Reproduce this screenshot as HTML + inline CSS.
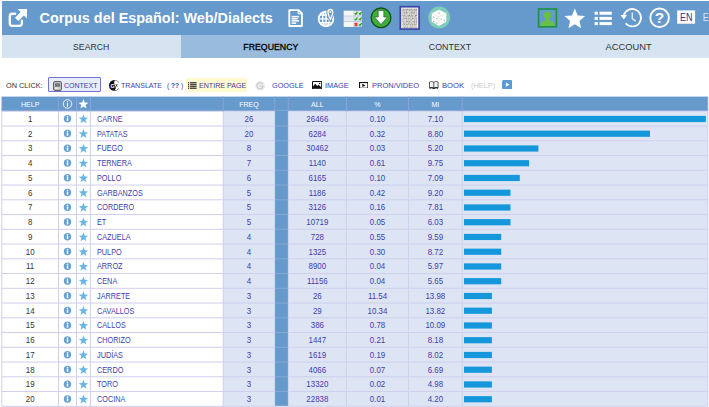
<!DOCTYPE html>
<html lang="es">
<head>
<meta charset="utf-8">
<title>Corpus del Español: Web/Dialects</title>
<style>
html,body{margin:0;padding:0;background:#fff;}
body{width:709px;height:407px;overflow:hidden;position:relative;font-family:"Liberation Sans",sans-serif;}
#hdr{position:absolute;left:2px;top:1px;width:716px;height:34px;background:#6699cc;}
#title{position:absolute;left:37.5px;top:7.5px;font-size:14.4px;font-weight:bold;color:#fff;white-space:nowrap;line-height:18px;}
.ic{position:absolute;}
#nav{position:absolute;left:2px;top:35px;width:716px;height:23px;background:#d6e4f1;}
.tab{position:absolute;top:0;height:23px;width:179px;text-align:center;font-size:9.2px;line-height:25.2px;color:#333;}
.tab b{display:inline-block;font-weight:inherit;}
.tab.on{background:#99bbdd;color:#000;-webkit-text-stroke:.3px #000;}
#oc{position:absolute;left:0;top:77.500px;height:15px;width:709px;font-size:8px;color:#333;}
#oc span{position:absolute;top:0;line-height:15px;white-space:nowrap;color:#4040aa;transform-origin:0 50%;display:block;}
#oc svg{position:absolute;}
#tb{position:absolute;left:0;top:0;}
</style>
</head>
<body>
<div id="hdr">
<svg class="ic" style="left:-2px;top:-1px" width="709" height="36" viewBox="0 0 709 36">
<!-- external link -->
<g fill="none" stroke="#fff" stroke-width="2.300" stroke-linecap="round" stroke-linejoin="round">
<path d="M15.200 13.750H12.300a2.500 2.500 0 0 0-2.500 2.500v7.100a2.500 2.500 0 0 0 2.500 2.500h7.100a2.500 2.500 0 0 0 2.500-2.500V20.600"/>
</g>
<path d="M17.500 9H27v9.500l-3.120-3.120-5.580 5.620-3.300-3.300 5.620-5.580z" fill="#fff"/>
<!-- doc -->
<g>
<path d="M289.300 10.100h9.300l3.300 3.300v12.600h-12.600z" fill="none" stroke="#fff" stroke-width="1.900" stroke-linejoin="round"/>
<path d="M298.200 10.400v3.400h3.400" fill="none" stroke="#fff" stroke-width="1.100"/>
<rect x="291.600" y="15.900" width="7.400" height="1.500" fill="#fff"/>
<rect x="291.600" y="18" width="6" height="1.500" fill="#fff"/>
<rect x="291.600" y="20.100" width="7.400" height="1.500" fill="#fff"/>
<rect x="291.600" y="22.400" width="4.600" height="1.500" fill="#fff"/>
</g>
<!-- globe with pin -->
<g fill="none" stroke="#fff">
<circle cx="326" cy="18.900" r="7.400" stroke-width="1.700"/>
<ellipse cx="326" cy="18.900" rx="3.500" ry="7.400" stroke-width="1.400"/>
<path d="M318.600 18.900h14.800M319.800 15h12.400M319.800 22.800h12.400M326 11.500v14.800" stroke-width="1.400"/>
</g>
<path d="M330.400 9.500a2.400 2.400 0 0 1 2.400 2.400c0 2.300-2.400 7.300-2.400 7.300s-2.400-5-2.400-7.300a2.400 2.400 0 0 1 2.400-2.400z" fill="#6699cc" stroke="#6699cc" stroke-width="3.200"/>
<path d="M330.400 9.500a2.400 2.400 0 0 1 2.400 2.400c0 2.300-2.400 7.300-2.400 7.300s-2.400-5-2.400-7.300a2.400 2.400 0 0 1 2.400-2.400z" fill="#6699cc" stroke="#fff" stroke-width="1.300"/>
<circle cx="330.400" cy="12" r=".9" fill="#fff"/>
<!-- grid -->
<g>
<rect x="343.800" y="10.800" width="18" height="16" fill="#e8e8e8"/>
<rect x="343.800" y="10.800" width="9.800" height="4.800" fill="#f6f6f6"/>
<rect x="343.800" y="16.400" width="9.800" height="4.800" fill="#e6ecf4"/>
<rect x="343.800" y="22" width="9.800" height="4.800" fill="#f6f6f6"/>
<rect x="343.800" y="15.700" width="18" height=".7" fill="#b8c8dc"/>
<rect x="343.800" y="21.300" width="18" height=".7" fill="#b8c8dc"/>
<rect x="353.600" y="10.800" width=".7" height="16" fill="#b8c8dc"/>
<rect x="357.700" y="10.800" width=".7" height="16" fill="#b8c8dc"/>
<g fill="none" stroke="#2aa52a" stroke-width="1.300">
<path d="M354.800 13.200l1 1.200 1.600-2.600M359 13.200l1 1.200 1.600-2.600M354.800 18.800l1 1.200 1.600-2.600M359 18.800l1 1.200 1.600-2.600M359 24.400l1 1.200 1.600-2.600"/>
</g>
<path d="M354.800 23l2.400 3M357.200 23l-2.400 3" stroke="#e03030" stroke-width="1.300" fill="none"/>
</g>
<!-- green download -->
<circle cx="381" cy="17.800" r="9.800" fill="#3fae3a" stroke="#14521a" stroke-width="1.400"/>
<path d="M378.200 10.400h5.600v6.600h3.700l-6.500 7.600-6.500-7.600h3.700z" fill="#fff" stroke="#14521a" stroke-width=".6" stroke-linejoin="round"/>
<!-- text doc -->
<rect x="400.300" y="6.700" width="18.800" height="22.400" fill="#f2efe4" stroke="#3a46a8" stroke-width="1.700"/>
<g fill="none">
<path d="M402.400 9.30h14.600" stroke="#7d7d7d" stroke-width=".95" stroke-dasharray="1.2 0.4 1.6 0.7 0.6 0.4 2.0 0.4" stroke-dashoffset="1.10"/>
<path d="M402.400 10.82h14.600" stroke="#858585" stroke-width=".95" stroke-dasharray="2.0 0.4 0.6 0.4 1.6 0.5 0.6 0.4" stroke-dashoffset="0.27"/>
<path d="M402.400 12.34h14.600" stroke="#8c8c8c" stroke-width=".95" stroke-dasharray="0.6 0.7 0.6 0.4 2.0 0.4 2.0 0.7" stroke-dashoffset="1.19"/>
<path d="M402.400 13.86h14.600" stroke="#8c8c8c" stroke-width=".95" stroke-dasharray="0.6 0.7 0.9 0.5 1.6 0.4 2.0 0.4" stroke-dashoffset="1.71"/>
<path d="M402.400 15.38h14.600" stroke="#7d7d7d" stroke-width=".95" stroke-dasharray="0.6 0.7 2.0 0.7 0.9 0.5 0.6 0.7" stroke-dashoffset="2.14"/>
<path d="M402.400 16.90h14.600" stroke="#858585" stroke-width=".95" stroke-dasharray="2.0 0.4 1.6 0.7 2.0 0.5 1.2 0.5" stroke-dashoffset="1.76"/>
<path d="M402.400 18.42h14.600" stroke="#999" stroke-width=".95" stroke-dasharray="1.2 0.5 0.9 0.4 0.9 0.4 2.0 0.5" stroke-dashoffset="1.58"/>
<path d="M402.400 19.94h14.600" stroke="#8c8c8c" stroke-width=".95" stroke-dasharray="1.6 0.5 2.0 0.4 0.6 0.7 1.6 0.4" stroke-dashoffset="2.27"/>
<path d="M402.400 21.46h14.600" stroke="#999" stroke-width=".95" stroke-dasharray="1.6 0.5 0.6 0.7 0.6 0.7 2.0 0.5" stroke-dashoffset="1.02"/>
<path d="M402.400 22.98h14.600" stroke="#7d7d7d" stroke-width=".95" stroke-dasharray="2.0 0.5 2.0 0.5 0.6 0.4 1.2 0.5" stroke-dashoffset="2.09"/>
<path d="M402.400 24.50h14.600" stroke="#999" stroke-width=".95" stroke-dasharray="0.6 0.7 1.2 0.7 2.0 0.7 1.6 0.5" stroke-dashoffset="2.15"/>
<path d="M402.400 26.02h14.600" stroke="#999" stroke-width=".95" stroke-dasharray="0.6 0.5 1.2 0.4 2.0 0.4 1.6 0.4" stroke-dashoffset="0.65"/>
<path d="M402.400 27.54h14.600" stroke="#999" stroke-width=".95" stroke-dasharray="0.9 0.7 0.9 0.5 1.6 0.5 0.6 0.4" stroke-dashoffset="1.35"/>
</g>
<!-- dice -->
<circle cx="439.200" cy="17.500" r="10.900" fill="#7fccba"/>
<path d="M439 9.800l7.300 3.400v8.600l-7.300 4.300-7.300-4.300v-8.600z" fill="#fcfcf8"/>
<path d="M431.700 13.200l7.300 3.700 7.300-3.700M439 16.900v9.200" fill="none" stroke="#e4e4d8" stroke-width=".7"/>
<g fill="#6a70b8">
<circle cx="439" cy="13" r=".6"/><circle cx="433.600" cy="17" r=".55"/><circle cx="436.900" cy="23" r=".55"/><circle cx="433.600" cy="21.200" r=".55"/><circle cx="436.900" cy="18.600" r=".55"/><circle cx="444.200" cy="20.200" r=".55"/><circle cx="441.200" cy="19" r=".55"/>
</g>
<!-- user -->
<rect x="538.600" y="9" width="17.800" height="17.800" fill="#6699cc" stroke="#1c9444" stroke-width="1.700"/>
<circle cx="547.500" cy="15.200" r="3.700" fill="#6abf45"/>
<path d="M540.300 25.900c.4-3.600 3-5.400 7.200-5.400s6.800 1.800 7.200 5.400z" fill="#6abf45"/>
<rect x="545.700" y="17.500" width="3.600" height="4" fill="#6abf45"/>
<!-- star -->
<path d="M574.800 8.500l2.900 6.900 7.400.6-5.600 4.900 1.700 7.300-6.400-3.900-6.400 3.900 1.700-7.300-5.600-4.900 7.400-.6z" fill="#fff"/>
<!-- list -->
<g fill="#fff">
<rect x="594.600" y="11.700" width="3.200" height="3"/><rect x="599.500" y="11.700" width="12.300" height="3"/>
<rect x="594.600" y="16.900" width="3.200" height="3"/><rect x="599.500" y="16.900" width="12.300" height="3"/>
<rect x="594.600" y="22.100" width="3.200" height="3"/><rect x="599.500" y="22.100" width="12.300" height="3"/>
</g>
<!-- history -->
<path d="M623.600 17.400a8.700 8.700 0 1 1 2 5.900" fill="none" stroke="#fff" stroke-width="1.800"/>
<path d="M620.500 15l3.300 4.600 3.200-4.600z" fill="#fff"/>
<path d="M632.300 12.400v6.200l3.400 2.500" fill="none" stroke="#e2ecf6" stroke-width="1.400"/>
<!-- help -->
<circle cx="659.600" cy="17.800" r="9.300" fill="none" stroke="#fff" stroke-width="1.900"/>
<text x="659.600" y="23.400" text-anchor="middle" font-family="Liberation Sans, sans-serif" font-weight="bold" font-size="15.500" fill="#fff">?</text>
<!-- EN -->
<rect x="677.200" y="10.400" width="17.900" height="13.300" fill="#fff"/>
<text transform="translate(686.200 20.900) scale(.9 1)" text-anchor="middle" font-family="Liberation Sans, sans-serif" font-size="10" fill="#33338f">EN</text>
<text transform="translate(702.700 20.900) scale(.9 1)" font-family="Liberation Sans, sans-serif" font-size="10" fill="#d8e8f8">ES</text>
</svg>

<div id="title">Corpus del Español: Web/Dialects</div>
</div>
<div id="nav">
<div class="tab" style="left:0"><b style="transform:scaleX(.945)">SEARCH</b></div>
<div class="tab on" style="left:179px"><b style="transform:scaleX(.953)">FREQUENCY</b></div>
<div class="tab" style="left:358px"><b style="transform:scaleX(.963)">CONTEXT</b></div>
<div class="tab" style="left:537px"><b style="transform:scaleX(1.017)">ACCOUNT</b></div>
</div>
<div id="oc">
<span style="left:6.400px;color:#333;transform:scaleX(.915)">ON CLICK:</span>
<div style="position:absolute;left:48.200px;top:-.5px;width:53.200px;height:15px;box-sizing:border-box;border:1px solid #7272d2;background:#e6ecf8;border-radius:1px"></div>
<svg style="left:53px;top:3px" width="9" height="10" viewBox="0 0 9 10"><rect x=".6" y=".6" width="7.800" height="8.800" rx="1.200" fill="#c9c9c9" stroke="#555" stroke-width="1"/><rect x="2" y="2.200" width="5" height="3.600" fill="#777"/><rect x="2" y="6.400" width="3.400" height="1.600" fill="#e8e8e8"/></svg>
<span style="left:63.800px;transform:scaleX(.874)">CONTEXT</span>
<svg style="left:108.600px;top:2.600px" width="10.800" height="10.800" viewBox="0 0 20 20"><circle cx="10" cy="10" r="10" fill="#111"/><path d="M10.500.8a9.200 9.200 0 0 1 0 18.400c2.400-2.600 2.600-5.400.8-8.400-1.600-2.800-2.600-6-.8-10z" fill="#fff"/><text x="3" y="14" font-family="Liberation Sans, sans-serif" font-size="10" font-weight="bold" fill="#fff">G</text><path d="M12.500 7.500l3 5M15.500 7.500l-3 5" stroke="#111" stroke-width="1.200"/></svg>
<span style="left:121px;transform:scaleX(.881)">TRANSLATE</span>
<span style="left:167px;transform:scaleX(.83)">( <b>??</b> )</span>
<div style="position:absolute;left:186px;top:.4px;width:61.100px;height:14px;background:#fff9cf"></div>
<svg style="left:188px;top:4px" width="8.600" height="7.600" viewBox="0 0 8.600 7.600"><g fill="#222"><rect x="0" y=".2" width="1.200" height="1.200"/><rect x="2" y=".2" width="6.600" height="1.200"/><rect x="0" y="2.200" width="1.200" height="1.200"/><rect x="2" y="2.200" width="6.600" height="1.200"/><rect x="0" y="4.200" width="1.200" height="1.200"/><rect x="2" y="4.200" width="6.600" height="1.200"/><rect x="0" y="6.200" width="1.200" height="1.200"/><rect x="2" y="6.200" width="6.600" height="1.200"/></g></svg>
<span style="left:198.800px;transform:scaleX(.887)">ENTIRE PAGE</span>
<svg style="left:255.400px;top:3px" width="10.400" height="9.400" viewBox="0 0 20 18"><ellipse cx="10" cy="9" rx="9.600" ry="8.800" fill="#ececec"/><path d="M14.600 5.800a6 5.600 0 1 0 1.200 4H10.400" fill="none" stroke="#cdcdcd" stroke-width="2.600"/></svg>
<span style="left:271.600px;transform:scaleX(.911)">GOOGLE</span>
<svg style="left:311.500px;top:3.300px" width="10.200" height="8.400" viewBox="0 0 10.200 8.400"><rect x="0" y="0" width="10.200" height="8.400" rx="1" fill="#111"/><rect x="1" y="1" width="8.200" height="6.400" fill="#fff"/><path d="M1 7.400v-2l2.200-2.600 2 2.200 1.400-1.200 2.600 2.400v1.200z" fill="#111"/><circle cx="7.600" cy="2.500" r=".8" fill="#111"/></svg>
<span style="left:324.600px;transform:scaleX(.919)">IMAGE</span>
<svg style="left:359px;top:4.100px" width="9.400" height="6.800" viewBox="0 0 9.400 6.800"><rect x=".55" y=".55" width="8.300" height="5.700" fill="#fff" stroke="#111" stroke-width="1.100"/><path d="M3.300 1.700l3.300 1.700-3.300 1.700z" fill="#111"/></svg>
<span style="left:371.700px;transform:scaleX(.936)">PRON/VIDEO</span>
<svg style="left:429.400px;top:3.700px" width="9.600" height="8" viewBox="0 0 9.600 8"><path d="M.5 1.100c1.600-.8 3-.8 4.300.2 1.300-1 2.700-1 4.300-.2v5.800c-1.600-.6-3-.5-4.300.3-1.300-.8-2.700-.9-4.300-.3z" fill="#f4f4f4" stroke="#333" stroke-width=".8" stroke-linejoin="round"/><path d="M4.800 1.300v6" stroke="#333" stroke-width=".8"/><path d="M.5 7.200c1.600-.6 3-.5 4.300.3 1.300-.8 2.700-.9 4.300-.3" fill="none" stroke="#111" stroke-width="1.100"/></svg>
<span style="left:441.700px;transform:scaleX(.956)">BOOK</span>
<span style="left:471.300px;transform:scaleX(.919);color:#ccc">(HELP)</span>
<svg style="left:501.700px;top:2.700px" width="10.600" height="9.200" viewBox="0 0 10.600 9.200"><rect x="0" y="0" width="10.600" height="9.200" rx="1.600" fill="#5b9bd5"/><path d="M3.900 2.400l3.600 2.200-3.600 2.200z" fill="#fff"/></svg>

</div>
<svg id="tb" width="709" height="407" viewBox="0 0 709 407" font-family="Liberation Sans, sans-serif">
<rect x="1.8" y="96.6" width="706.0" height="14.30" fill="#6699cc"/>
<rect x="223.2" y="111.3" width="484.6" height="295.00" fill="#dde5f5"/>
<rect x="1.8" y="110.80" width="706.0" height="1" fill="#cfcfee"/>
<rect x="1.8" y="125.55" width="706.0" height="1" fill="#cfcfee"/>
<rect x="1.8" y="140.30" width="706.0" height="1" fill="#cfcfee"/>
<rect x="1.8" y="155.05" width="706.0" height="1" fill="#cfcfee"/>
<rect x="1.8" y="169.80" width="706.0" height="1" fill="#cfcfee"/>
<rect x="1.8" y="184.55" width="706.0" height="1" fill="#cfcfee"/>
<rect x="1.8" y="199.30" width="706.0" height="1" fill="#cfcfee"/>
<rect x="1.8" y="214.05" width="706.0" height="1" fill="#cfcfee"/>
<rect x="1.8" y="228.80" width="706.0" height="1" fill="#cfcfee"/>
<rect x="1.8" y="243.55" width="706.0" height="1" fill="#cfcfee"/>
<rect x="1.8" y="258.30" width="706.0" height="1" fill="#cfcfee"/>
<rect x="1.8" y="273.05" width="706.0" height="1" fill="#cfcfee"/>
<rect x="1.8" y="287.80" width="706.0" height="1" fill="#cfcfee"/>
<rect x="1.8" y="302.55" width="706.0" height="1" fill="#cfcfee"/>
<rect x="1.8" y="317.30" width="706.0" height="1" fill="#cfcfee"/>
<rect x="1.8" y="332.05" width="706.0" height="1" fill="#cfcfee"/>
<rect x="1.8" y="346.80" width="706.0" height="1" fill="#cfcfee"/>
<rect x="1.8" y="361.55" width="706.0" height="1" fill="#cfcfee"/>
<rect x="1.8" y="376.30" width="706.0" height="1" fill="#cfcfee"/>
<rect x="1.8" y="391.05" width="706.0" height="1" fill="#cfcfee"/>
<rect x="1.8" y="405.80" width="706.0" height="1" fill="#cfcfee"/>
<rect x="1.30" y="111.3" width="1" height="295.00" fill="#cfcfee"/>
<rect x="58.00" y="111.3" width="1" height="295.00" fill="#cfcfee"/>
<rect x="76.00" y="111.3" width="1" height="295.00" fill="#cfcfee"/>
<rect x="89.90" y="111.3" width="1" height="295.00" fill="#cfcfee"/>
<rect x="222.70" y="111.3" width="1" height="295.00" fill="#cfcfee"/>
<rect x="274.30" y="111.3" width="1" height="295.00" fill="#cfcfee"/>
<rect x="287.70" y="111.3" width="1" height="295.00" fill="#cfcfee"/>
<rect x="346.00" y="111.3" width="1" height="295.00" fill="#cfcfee"/>
<rect x="408.00" y="111.3" width="1" height="295.00" fill="#cfcfee"/>
<rect x="461.70" y="111.3" width="1" height="295.00" fill="#cfcfee"/>
<rect x="707.30" y="111.3" width="1" height="295.00" fill="#cfcfee"/>
<rect x="275.10" y="110.8" width="12.80" height="295.00" fill="#6699cc"/>
<rect x="275.10" y="125.55" width="12.80" height="1" fill="#c9d6f0" opacity=".28"/>
<rect x="275.10" y="140.30" width="12.80" height="1" fill="#c9d6f0" opacity=".28"/>
<rect x="275.10" y="155.05" width="12.80" height="1" fill="#c9d6f0" opacity=".28"/>
<rect x="275.10" y="169.80" width="12.80" height="1" fill="#c9d6f0" opacity=".28"/>
<rect x="275.10" y="184.55" width="12.80" height="1" fill="#c9d6f0" opacity=".28"/>
<rect x="275.10" y="199.30" width="12.80" height="1" fill="#c9d6f0" opacity=".28"/>
<rect x="275.10" y="214.05" width="12.80" height="1" fill="#c9d6f0" opacity=".28"/>
<rect x="275.10" y="228.80" width="12.80" height="1" fill="#c9d6f0" opacity=".28"/>
<rect x="275.10" y="243.55" width="12.80" height="1" fill="#c9d6f0" opacity=".28"/>
<rect x="275.10" y="258.30" width="12.80" height="1" fill="#c9d6f0" opacity=".28"/>
<rect x="275.10" y="273.05" width="12.80" height="1" fill="#c9d6f0" opacity=".28"/>
<rect x="275.10" y="287.80" width="12.80" height="1" fill="#c9d6f0" opacity=".28"/>
<rect x="275.10" y="302.55" width="12.80" height="1" fill="#c9d6f0" opacity=".28"/>
<rect x="275.10" y="317.30" width="12.80" height="1" fill="#c9d6f0" opacity=".28"/>
<rect x="275.10" y="332.05" width="12.80" height="1" fill="#c9d6f0" opacity=".28"/>
<rect x="275.10" y="346.80" width="12.80" height="1" fill="#c9d6f0" opacity=".28"/>
<rect x="275.10" y="361.55" width="12.80" height="1" fill="#c9d6f0" opacity=".28"/>
<rect x="275.10" y="376.30" width="12.80" height="1" fill="#c9d6f0" opacity=".28"/>
<rect x="275.10" y="391.05" width="12.80" height="1" fill="#c9d6f0" opacity=".28"/>
<rect x="58.00" y="96.6" width="1" height="14.70" fill="#8f9fe0"/>
<rect x="76.00" y="96.6" width="1" height="14.70" fill="#8f9fe0"/>
<rect x="89.90" y="96.6" width="1" height="14.70" fill="#8f9fe0"/>
<rect x="222.70" y="96.6" width="1" height="14.70" fill="#8f9fe0"/>
<rect x="274.30" y="96.6" width="1" height="14.70" fill="#8f9fe0"/>
<rect x="287.70" y="96.6" width="1" height="14.70" fill="#8f9fe0"/>
<rect x="346.00" y="96.6" width="1" height="14.70" fill="#8f9fe0"/>
<rect x="408.00" y="96.6" width="1" height="14.70" fill="#8f9fe0"/>
<rect x="461.70" y="96.6" width="1" height="14.70" fill="#8f9fe0"/>
<rect x="1.30" y="96.6" width="1" height="14.70" fill="#8f9fe0" opacity=".6"/>
<rect x="707.30" y="96.6" width="1" height="14.70" fill="#8f9fe0" opacity=".6"/>
<text transform="translate(30.15 106.70) scale(0.93 1)" font-size="7.6" fill="#fff" text-anchor="middle">HELP</text>
<text transform="translate(249.00 106.70) scale(0.93 1)" font-size="7.6" fill="#fff" text-anchor="middle">FREQ</text>
<text transform="translate(317.35 106.70) scale(0.93 1)" font-size="7.6" fill="#fff" text-anchor="middle">ALL</text>
<text transform="translate(377.50 106.70) scale(0.93 1)" font-size="7.6" fill="#fff" text-anchor="middle">%</text>
<text transform="translate(435.35 106.70) scale(0.93 1)" font-size="7.6" fill="#fff" text-anchor="middle">MI</text>
<g fill="#fff"><circle cx="67.50" cy="103.95" r="4.300" fill="none" stroke="#fff" stroke-width=".9"/><rect x="67.00" y="103.05" width="1" height="3.500"/><circle cx="67.50" cy="101.75" r=".65"/></g>
<path transform="translate(78.45 99.05) scale(.5)" d="M10 0l2.600 6.900 7.400.3-5.800 4.600 2 7.200L10 14.900 3.800 19l2-7.200L0 7.200l7.400-.3z" fill="#fff"/>
<text transform="translate(30.15 121.97) scale(0.965 1)" font-size="8.2" fill="#333" text-anchor="middle">1</text>
<circle cx="67.50" cy="118.77" r="3.700" fill="#64a1d3"/><rect x="66.75" y="118.08" width="1.500" height="3" fill="#fff"/><circle cx="67.50" cy="116.77" r=".85" fill="#fff"/>
<path transform="translate(78.75 114.27) scale(.47)" d="M10 0l2.600 6.900 7.400.3-5.800 4.600 2 7.200L10 14.900 3.800 19l2-7.200L0 7.200l7.400-.3z" fill="#6ab5e2"/>
<text transform="translate(97.00 121.97) scale(0.89 1)" font-size="8.2" fill="#4040aa" text-anchor="start">CARNE</text>
<text transform="translate(249.00 121.97) scale(0.965 1)" font-size="8.2" fill="#4040aa" text-anchor="middle">26</text>
<text transform="translate(317.35 121.97) scale(0.965 1)" font-size="8.2" fill="#4040aa" text-anchor="middle">26466</text>
<text transform="translate(377.50 121.97) scale(0.965 1)" font-size="8.2" fill="#4040aa" text-anchor="middle">0.10</text>
<text transform="translate(435.35 121.97) scale(0.965 1)" font-size="8.2" fill="#4040aa" text-anchor="middle">7.10</text>
<rect x="464.00" y="115.88" width="241.8" height="6.200" fill="#1497db"/>
<text transform="translate(30.15 136.73) scale(0.965 1)" font-size="8.2" fill="#333" text-anchor="middle">2</text>
<circle cx="67.50" cy="133.53" r="3.700" fill="#64a1d3"/><rect x="66.75" y="132.83" width="1.500" height="3" fill="#fff"/><circle cx="67.50" cy="131.53" r=".85" fill="#fff"/>
<path transform="translate(78.75 129.03) scale(.47)" d="M10 0l2.600 6.900 7.400.3-5.800 4.600 2 7.200L10 14.900 3.800 19l2-7.200L0 7.200l7.400-.3z" fill="#6ab5e2"/>
<text transform="translate(97.00 136.73) scale(0.89 1)" font-size="8.2" fill="#4040aa" text-anchor="start">PATATAS</text>
<text transform="translate(249.00 136.73) scale(0.965 1)" font-size="8.2" fill="#4040aa" text-anchor="middle">20</text>
<text transform="translate(317.35 136.73) scale(0.965 1)" font-size="8.2" fill="#4040aa" text-anchor="middle">6284</text>
<text transform="translate(377.50 136.73) scale(0.965 1)" font-size="8.2" fill="#4040aa" text-anchor="middle">0.32</text>
<text transform="translate(435.35 136.73) scale(0.965 1)" font-size="8.2" fill="#4040aa" text-anchor="middle">8.80</text>
<rect x="464.00" y="130.62" width="186.0" height="6.200" fill="#1497db"/>
<text transform="translate(30.15 151.48) scale(0.965 1)" font-size="8.2" fill="#333" text-anchor="middle">3</text>
<circle cx="67.50" cy="148.28" r="3.700" fill="#64a1d3"/><rect x="66.75" y="147.58" width="1.500" height="3" fill="#fff"/><circle cx="67.50" cy="146.28" r=".85" fill="#fff"/>
<path transform="translate(78.75 143.78) scale(.47)" d="M10 0l2.600 6.900 7.400.3-5.800 4.600 2 7.200L10 14.900 3.800 19l2-7.200L0 7.200l7.400-.3z" fill="#6ab5e2"/>
<text transform="translate(97.00 151.48) scale(0.89 1)" font-size="8.2" fill="#4040aa" text-anchor="start">FUEGO</text>
<text transform="translate(249.00 151.48) scale(0.965 1)" font-size="8.2" fill="#4040aa" text-anchor="middle">8</text>
<text transform="translate(317.35 151.48) scale(0.965 1)" font-size="8.2" fill="#4040aa" text-anchor="middle">30462</text>
<text transform="translate(377.50 151.48) scale(0.965 1)" font-size="8.2" fill="#4040aa" text-anchor="middle">0.03</text>
<text transform="translate(435.35 151.48) scale(0.965 1)" font-size="8.2" fill="#4040aa" text-anchor="middle">5.20</text>
<rect x="464.00" y="145.38" width="74.4" height="6.200" fill="#1497db"/>
<text transform="translate(30.15 166.23) scale(0.965 1)" font-size="8.2" fill="#333" text-anchor="middle">4</text>
<circle cx="67.50" cy="163.03" r="3.700" fill="#64a1d3"/><rect x="66.75" y="162.33" width="1.500" height="3" fill="#fff"/><circle cx="67.50" cy="161.03" r=".85" fill="#fff"/>
<path transform="translate(78.75 158.53) scale(.47)" d="M10 0l2.600 6.900 7.400.3-5.800 4.600 2 7.200L10 14.900 3.800 19l2-7.200L0 7.200l7.400-.3z" fill="#6ab5e2"/>
<text transform="translate(97.00 166.23) scale(0.89 1)" font-size="8.2" fill="#4040aa" text-anchor="start">TERNERA</text>
<text transform="translate(249.00 166.23) scale(0.965 1)" font-size="8.2" fill="#4040aa" text-anchor="middle">7</text>
<text transform="translate(317.35 166.23) scale(0.965 1)" font-size="8.2" fill="#4040aa" text-anchor="middle">1140</text>
<text transform="translate(377.50 166.23) scale(0.965 1)" font-size="8.2" fill="#4040aa" text-anchor="middle">0.61</text>
<text transform="translate(435.35 166.23) scale(0.965 1)" font-size="8.2" fill="#4040aa" text-anchor="middle">9.75</text>
<rect x="464.00" y="160.12" width="65.1" height="6.200" fill="#1497db"/>
<text transform="translate(30.15 180.98) scale(0.965 1)" font-size="8.2" fill="#333" text-anchor="middle">5</text>
<circle cx="67.50" cy="177.78" r="3.700" fill="#64a1d3"/><rect x="66.75" y="177.08" width="1.500" height="3" fill="#fff"/><circle cx="67.50" cy="175.78" r=".85" fill="#fff"/>
<path transform="translate(78.75 173.28) scale(.47)" d="M10 0l2.600 6.900 7.400.3-5.800 4.600 2 7.200L10 14.900 3.800 19l2-7.200L0 7.200l7.400-.3z" fill="#6ab5e2"/>
<text transform="translate(97.00 180.98) scale(0.89 1)" font-size="8.2" fill="#4040aa" text-anchor="start">POLLO</text>
<text transform="translate(249.00 180.98) scale(0.965 1)" font-size="8.2" fill="#4040aa" text-anchor="middle">6</text>
<text transform="translate(317.35 180.98) scale(0.965 1)" font-size="8.2" fill="#4040aa" text-anchor="middle">6165</text>
<text transform="translate(377.50 180.98) scale(0.965 1)" font-size="8.2" fill="#4040aa" text-anchor="middle">0.10</text>
<text transform="translate(435.35 180.98) scale(0.965 1)" font-size="8.2" fill="#4040aa" text-anchor="middle">7.09</text>
<rect x="464.00" y="174.88" width="55.8" height="6.200" fill="#1497db"/>
<text transform="translate(30.15 195.73) scale(0.965 1)" font-size="8.2" fill="#333" text-anchor="middle">6</text>
<circle cx="67.50" cy="192.53" r="3.700" fill="#64a1d3"/><rect x="66.75" y="191.83" width="1.500" height="3" fill="#fff"/><circle cx="67.50" cy="190.53" r=".85" fill="#fff"/>
<path transform="translate(78.75 188.03) scale(.47)" d="M10 0l2.600 6.900 7.400.3-5.800 4.600 2 7.200L10 14.900 3.800 19l2-7.200L0 7.200l7.400-.3z" fill="#6ab5e2"/>
<text transform="translate(97.00 195.73) scale(0.89 1)" font-size="8.2" fill="#4040aa" text-anchor="start">GARBANZOS</text>
<text transform="translate(249.00 195.73) scale(0.965 1)" font-size="8.2" fill="#4040aa" text-anchor="middle">5</text>
<text transform="translate(317.35 195.73) scale(0.965 1)" font-size="8.2" fill="#4040aa" text-anchor="middle">1186</text>
<text transform="translate(377.50 195.73) scale(0.965 1)" font-size="8.2" fill="#4040aa" text-anchor="middle">0.42</text>
<text transform="translate(435.35 195.73) scale(0.965 1)" font-size="8.2" fill="#4040aa" text-anchor="middle">9.20</text>
<rect x="464.00" y="189.62" width="46.5" height="6.200" fill="#1497db"/>
<text transform="translate(30.15 210.48) scale(0.965 1)" font-size="8.2" fill="#333" text-anchor="middle">7</text>
<circle cx="67.50" cy="207.28" r="3.700" fill="#64a1d3"/><rect x="66.75" y="206.58" width="1.500" height="3" fill="#fff"/><circle cx="67.50" cy="205.28" r=".85" fill="#fff"/>
<path transform="translate(78.75 202.78) scale(.47)" d="M10 0l2.600 6.900 7.400.3-5.800 4.600 2 7.200L10 14.900 3.800 19l2-7.200L0 7.200l7.400-.3z" fill="#6ab5e2"/>
<text transform="translate(97.00 210.48) scale(0.89 1)" font-size="8.2" fill="#4040aa" text-anchor="start">CORDERO</text>
<text transform="translate(249.00 210.48) scale(0.965 1)" font-size="8.2" fill="#4040aa" text-anchor="middle">5</text>
<text transform="translate(317.35 210.48) scale(0.965 1)" font-size="8.2" fill="#4040aa" text-anchor="middle">3126</text>
<text transform="translate(377.50 210.48) scale(0.965 1)" font-size="8.2" fill="#4040aa" text-anchor="middle">0.16</text>
<text transform="translate(435.35 210.48) scale(0.965 1)" font-size="8.2" fill="#4040aa" text-anchor="middle">7.81</text>
<rect x="464.00" y="204.38" width="46.5" height="6.200" fill="#1497db"/>
<text transform="translate(30.15 225.23) scale(0.965 1)" font-size="8.2" fill="#333" text-anchor="middle">8</text>
<circle cx="67.50" cy="222.03" r="3.700" fill="#64a1d3"/><rect x="66.75" y="221.33" width="1.500" height="3" fill="#fff"/><circle cx="67.50" cy="220.03" r=".85" fill="#fff"/>
<path transform="translate(78.75 217.53) scale(.47)" d="M10 0l2.600 6.900 7.400.3-5.800 4.600 2 7.200L10 14.900 3.800 19l2-7.200L0 7.200l7.400-.3z" fill="#6ab5e2"/>
<text transform="translate(97.00 225.23) scale(0.89 1)" font-size="8.2" fill="#4040aa" text-anchor="start">ET</text>
<text transform="translate(249.00 225.23) scale(0.965 1)" font-size="8.2" fill="#4040aa" text-anchor="middle">5</text>
<text transform="translate(317.35 225.23) scale(0.965 1)" font-size="8.2" fill="#4040aa" text-anchor="middle">10719</text>
<text transform="translate(377.50 225.23) scale(0.965 1)" font-size="8.2" fill="#4040aa" text-anchor="middle">0.05</text>
<text transform="translate(435.35 225.23) scale(0.965 1)" font-size="8.2" fill="#4040aa" text-anchor="middle">6.03</text>
<rect x="464.00" y="219.12" width="46.5" height="6.200" fill="#1497db"/>
<text transform="translate(30.15 239.98) scale(0.965 1)" font-size="8.2" fill="#333" text-anchor="middle">9</text>
<circle cx="67.50" cy="236.78" r="3.700" fill="#64a1d3"/><rect x="66.75" y="236.08" width="1.500" height="3" fill="#fff"/><circle cx="67.50" cy="234.78" r=".85" fill="#fff"/>
<path transform="translate(78.75 232.28) scale(.47)" d="M10 0l2.600 6.900 7.400.3-5.800 4.600 2 7.200L10 14.900 3.800 19l2-7.200L0 7.200l7.400-.3z" fill="#6ab5e2"/>
<text transform="translate(97.00 239.98) scale(0.89 1)" font-size="8.2" fill="#4040aa" text-anchor="start">CAZUELA</text>
<text transform="translate(249.00 239.98) scale(0.965 1)" font-size="8.2" fill="#4040aa" text-anchor="middle">4</text>
<text transform="translate(317.35 239.98) scale(0.965 1)" font-size="8.2" fill="#4040aa" text-anchor="middle">728</text>
<text transform="translate(377.50 239.98) scale(0.965 1)" font-size="8.2" fill="#4040aa" text-anchor="middle">0.55</text>
<text transform="translate(435.35 239.98) scale(0.965 1)" font-size="8.2" fill="#4040aa" text-anchor="middle">9.59</text>
<rect x="464.00" y="233.88" width="37.2" height="6.200" fill="#1497db"/>
<text transform="translate(30.15 254.73) scale(0.965 1)" font-size="8.2" fill="#333" text-anchor="middle">10</text>
<circle cx="67.50" cy="251.53" r="3.700" fill="#64a1d3"/><rect x="66.75" y="250.83" width="1.500" height="3" fill="#fff"/><circle cx="67.50" cy="249.53" r=".85" fill="#fff"/>
<path transform="translate(78.75 247.03) scale(.47)" d="M10 0l2.600 6.900 7.400.3-5.800 4.600 2 7.200L10 14.900 3.800 19l2-7.200L0 7.200l7.400-.3z" fill="#6ab5e2"/>
<text transform="translate(97.00 254.73) scale(0.89 1)" font-size="8.2" fill="#4040aa" text-anchor="start">PULPO</text>
<text transform="translate(249.00 254.73) scale(0.965 1)" font-size="8.2" fill="#4040aa" text-anchor="middle">4</text>
<text transform="translate(317.35 254.73) scale(0.965 1)" font-size="8.2" fill="#4040aa" text-anchor="middle">1325</text>
<text transform="translate(377.50 254.73) scale(0.965 1)" font-size="8.2" fill="#4040aa" text-anchor="middle">0.30</text>
<text transform="translate(435.35 254.73) scale(0.965 1)" font-size="8.2" fill="#4040aa" text-anchor="middle">8.72</text>
<rect x="464.00" y="248.62" width="37.2" height="6.200" fill="#1497db"/>
<text transform="translate(30.15 269.48) scale(0.965 1)" font-size="8.2" fill="#333" text-anchor="middle">11</text>
<circle cx="67.50" cy="266.28" r="3.700" fill="#64a1d3"/><rect x="66.75" y="265.57" width="1.500" height="3" fill="#fff"/><circle cx="67.50" cy="264.28" r=".85" fill="#fff"/>
<path transform="translate(78.75 261.78) scale(.47)" d="M10 0l2.600 6.900 7.400.3-5.800 4.600 2 7.200L10 14.900 3.800 19l2-7.200L0 7.200l7.400-.3z" fill="#6ab5e2"/>
<text transform="translate(97.00 269.48) scale(0.89 1)" font-size="8.2" fill="#4040aa" text-anchor="start">ARROZ</text>
<text transform="translate(249.00 269.48) scale(0.965 1)" font-size="8.2" fill="#4040aa" text-anchor="middle">4</text>
<text transform="translate(317.35 269.48) scale(0.965 1)" font-size="8.2" fill="#4040aa" text-anchor="middle">8900</text>
<text transform="translate(377.50 269.48) scale(0.965 1)" font-size="8.2" fill="#4040aa" text-anchor="middle">0.04</text>
<text transform="translate(435.35 269.48) scale(0.965 1)" font-size="8.2" fill="#4040aa" text-anchor="middle">5.97</text>
<rect x="464.00" y="263.38" width="37.2" height="6.200" fill="#1497db"/>
<text transform="translate(30.15 284.23) scale(0.965 1)" font-size="8.2" fill="#333" text-anchor="middle">12</text>
<circle cx="67.50" cy="281.03" r="3.700" fill="#64a1d3"/><rect x="66.75" y="280.32" width="1.500" height="3" fill="#fff"/><circle cx="67.50" cy="279.03" r=".85" fill="#fff"/>
<path transform="translate(78.75 276.53) scale(.47)" d="M10 0l2.600 6.900 7.400.3-5.800 4.600 2 7.200L10 14.900 3.800 19l2-7.200L0 7.200l7.400-.3z" fill="#6ab5e2"/>
<text transform="translate(97.00 284.23) scale(0.89 1)" font-size="8.2" fill="#4040aa" text-anchor="start">CENA</text>
<text transform="translate(249.00 284.23) scale(0.965 1)" font-size="8.2" fill="#4040aa" text-anchor="middle">4</text>
<text transform="translate(317.35 284.23) scale(0.965 1)" font-size="8.2" fill="#4040aa" text-anchor="middle">11156</text>
<text transform="translate(377.50 284.23) scale(0.965 1)" font-size="8.2" fill="#4040aa" text-anchor="middle">0.04</text>
<text transform="translate(435.35 284.23) scale(0.965 1)" font-size="8.2" fill="#4040aa" text-anchor="middle">5.65</text>
<rect x="464.00" y="278.12" width="37.2" height="6.200" fill="#1497db"/>
<text transform="translate(30.15 298.98) scale(0.965 1)" font-size="8.2" fill="#333" text-anchor="middle">13</text>
<circle cx="67.50" cy="295.78" r="3.700" fill="#64a1d3"/><rect x="66.75" y="295.07" width="1.500" height="3" fill="#fff"/><circle cx="67.50" cy="293.78" r=".85" fill="#fff"/>
<path transform="translate(78.75 291.28) scale(.47)" d="M10 0l2.600 6.900 7.400.3-5.800 4.600 2 7.200L10 14.900 3.800 19l2-7.200L0 7.200l7.400-.3z" fill="#6ab5e2"/>
<text transform="translate(97.00 298.98) scale(0.89 1)" font-size="8.2" fill="#4040aa" text-anchor="start">JARRETE</text>
<text transform="translate(249.00 298.98) scale(0.965 1)" font-size="8.2" fill="#4040aa" text-anchor="middle">3</text>
<text transform="translate(317.35 298.98) scale(0.965 1)" font-size="8.2" fill="#4040aa" text-anchor="middle">26</text>
<text transform="translate(377.50 298.98) scale(0.965 1)" font-size="8.2" fill="#4040aa" text-anchor="middle">11.54</text>
<text transform="translate(435.35 298.98) scale(0.965 1)" font-size="8.2" fill="#4040aa" text-anchor="middle">13.98</text>
<rect x="464.00" y="292.88" width="27.9" height="6.200" fill="#1497db"/>
<text transform="translate(30.15 313.73) scale(0.965 1)" font-size="8.2" fill="#333" text-anchor="middle">14</text>
<circle cx="67.50" cy="310.53" r="3.700" fill="#64a1d3"/><rect x="66.75" y="309.82" width="1.500" height="3" fill="#fff"/><circle cx="67.50" cy="308.53" r=".85" fill="#fff"/>
<path transform="translate(78.75 306.03) scale(.47)" d="M10 0l2.600 6.900 7.400.3-5.800 4.600 2 7.200L10 14.900 3.800 19l2-7.200L0 7.200l7.400-.3z" fill="#6ab5e2"/>
<text transform="translate(97.00 313.73) scale(0.89 1)" font-size="8.2" fill="#4040aa" text-anchor="start">CAVALLOS</text>
<text transform="translate(249.00 313.73) scale(0.965 1)" font-size="8.2" fill="#4040aa" text-anchor="middle">3</text>
<text transform="translate(317.35 313.73) scale(0.965 1)" font-size="8.2" fill="#4040aa" text-anchor="middle">29</text>
<text transform="translate(377.50 313.73) scale(0.965 1)" font-size="8.2" fill="#4040aa" text-anchor="middle">10.34</text>
<text transform="translate(435.35 313.73) scale(0.965 1)" font-size="8.2" fill="#4040aa" text-anchor="middle">13.82</text>
<rect x="464.00" y="307.62" width="27.9" height="6.200" fill="#1497db"/>
<text transform="translate(30.15 328.48) scale(0.965 1)" font-size="8.2" fill="#333" text-anchor="middle">15</text>
<circle cx="67.50" cy="325.28" r="3.700" fill="#64a1d3"/><rect x="66.75" y="324.57" width="1.500" height="3" fill="#fff"/><circle cx="67.50" cy="323.28" r=".85" fill="#fff"/>
<path transform="translate(78.75 320.78) scale(.47)" d="M10 0l2.600 6.900 7.400.3-5.800 4.600 2 7.200L10 14.900 3.800 19l2-7.200L0 7.200l7.400-.3z" fill="#6ab5e2"/>
<text transform="translate(97.00 328.48) scale(0.89 1)" font-size="8.2" fill="#4040aa" text-anchor="start">CALLOS</text>
<text transform="translate(249.00 328.48) scale(0.965 1)" font-size="8.2" fill="#4040aa" text-anchor="middle">3</text>
<text transform="translate(317.35 328.48) scale(0.965 1)" font-size="8.2" fill="#4040aa" text-anchor="middle">386</text>
<text transform="translate(377.50 328.48) scale(0.965 1)" font-size="8.2" fill="#4040aa" text-anchor="middle">0.78</text>
<text transform="translate(435.35 328.48) scale(0.965 1)" font-size="8.2" fill="#4040aa" text-anchor="middle">10.09</text>
<rect x="464.00" y="322.38" width="27.9" height="6.200" fill="#1497db"/>
<text transform="translate(30.15 343.23) scale(0.965 1)" font-size="8.2" fill="#333" text-anchor="middle">16</text>
<circle cx="67.50" cy="340.03" r="3.700" fill="#64a1d3"/><rect x="66.75" y="339.32" width="1.500" height="3" fill="#fff"/><circle cx="67.50" cy="338.03" r=".85" fill="#fff"/>
<path transform="translate(78.75 335.53) scale(.47)" d="M10 0l2.600 6.900 7.400.3-5.800 4.600 2 7.200L10 14.900 3.800 19l2-7.200L0 7.200l7.400-.3z" fill="#6ab5e2"/>
<text transform="translate(97.00 343.23) scale(0.89 1)" font-size="8.2" fill="#4040aa" text-anchor="start">CHORIZO</text>
<text transform="translate(249.00 343.23) scale(0.965 1)" font-size="8.2" fill="#4040aa" text-anchor="middle">3</text>
<text transform="translate(317.35 343.23) scale(0.965 1)" font-size="8.2" fill="#4040aa" text-anchor="middle">1447</text>
<text transform="translate(377.50 343.23) scale(0.965 1)" font-size="8.2" fill="#4040aa" text-anchor="middle">0.21</text>
<text transform="translate(435.35 343.23) scale(0.965 1)" font-size="8.2" fill="#4040aa" text-anchor="middle">8.18</text>
<rect x="464.00" y="337.12" width="27.9" height="6.200" fill="#1497db"/>
<text transform="translate(30.15 357.98) scale(0.965 1)" font-size="8.2" fill="#333" text-anchor="middle">17</text>
<circle cx="67.50" cy="354.78" r="3.700" fill="#64a1d3"/><rect x="66.75" y="354.07" width="1.500" height="3" fill="#fff"/><circle cx="67.50" cy="352.78" r=".85" fill="#fff"/>
<path transform="translate(78.75 350.28) scale(.47)" d="M10 0l2.600 6.900 7.400.3-5.800 4.600 2 7.200L10 14.900 3.800 19l2-7.200L0 7.200l7.400-.3z" fill="#6ab5e2"/>
<text transform="translate(97.00 357.98) scale(0.89 1)" font-size="8.2" fill="#4040aa" text-anchor="start">JUDÍAS</text>
<text transform="translate(249.00 357.98) scale(0.965 1)" font-size="8.2" fill="#4040aa" text-anchor="middle">3</text>
<text transform="translate(317.35 357.98) scale(0.965 1)" font-size="8.2" fill="#4040aa" text-anchor="middle">1619</text>
<text transform="translate(377.50 357.98) scale(0.965 1)" font-size="8.2" fill="#4040aa" text-anchor="middle">0.19</text>
<text transform="translate(435.35 357.98) scale(0.965 1)" font-size="8.2" fill="#4040aa" text-anchor="middle">8.02</text>
<rect x="464.00" y="351.88" width="27.9" height="6.200" fill="#1497db"/>
<text transform="translate(30.15 372.73) scale(0.965 1)" font-size="8.2" fill="#333" text-anchor="middle">18</text>
<circle cx="67.50" cy="369.53" r="3.700" fill="#64a1d3"/><rect x="66.75" y="368.82" width="1.500" height="3" fill="#fff"/><circle cx="67.50" cy="367.53" r=".85" fill="#fff"/>
<path transform="translate(78.75 365.03) scale(.47)" d="M10 0l2.600 6.900 7.400.3-5.800 4.600 2 7.200L10 14.900 3.800 19l2-7.200L0 7.200l7.400-.3z" fill="#6ab5e2"/>
<text transform="translate(97.00 372.73) scale(0.89 1)" font-size="8.2" fill="#4040aa" text-anchor="start">CERDO</text>
<text transform="translate(249.00 372.73) scale(0.965 1)" font-size="8.2" fill="#4040aa" text-anchor="middle">3</text>
<text transform="translate(317.35 372.73) scale(0.965 1)" font-size="8.2" fill="#4040aa" text-anchor="middle">4066</text>
<text transform="translate(377.50 372.73) scale(0.965 1)" font-size="8.2" fill="#4040aa" text-anchor="middle">0.07</text>
<text transform="translate(435.35 372.73) scale(0.965 1)" font-size="8.2" fill="#4040aa" text-anchor="middle">6.69</text>
<rect x="464.00" y="366.62" width="27.9" height="6.200" fill="#1497db"/>
<text transform="translate(30.15 387.48) scale(0.965 1)" font-size="8.2" fill="#333" text-anchor="middle">19</text>
<circle cx="67.50" cy="384.28" r="3.700" fill="#64a1d3"/><rect x="66.75" y="383.57" width="1.500" height="3" fill="#fff"/><circle cx="67.50" cy="382.28" r=".85" fill="#fff"/>
<path transform="translate(78.75 379.78) scale(.47)" d="M10 0l2.600 6.900 7.400.3-5.800 4.600 2 7.200L10 14.900 3.800 19l2-7.200L0 7.200l7.400-.3z" fill="#6ab5e2"/>
<text transform="translate(97.00 387.48) scale(0.89 1)" font-size="8.2" fill="#4040aa" text-anchor="start">TORO</text>
<text transform="translate(249.00 387.48) scale(0.965 1)" font-size="8.2" fill="#4040aa" text-anchor="middle">3</text>
<text transform="translate(317.35 387.48) scale(0.965 1)" font-size="8.2" fill="#4040aa" text-anchor="middle">13320</text>
<text transform="translate(377.50 387.48) scale(0.965 1)" font-size="8.2" fill="#4040aa" text-anchor="middle">0.02</text>
<text transform="translate(435.35 387.48) scale(0.965 1)" font-size="8.2" fill="#4040aa" text-anchor="middle">4.98</text>
<rect x="464.00" y="381.38" width="27.9" height="6.200" fill="#1497db"/>
<text transform="translate(30.15 402.23) scale(0.965 1)" font-size="8.2" fill="#333" text-anchor="middle">20</text>
<circle cx="67.50" cy="399.03" r="3.700" fill="#64a1d3"/><rect x="66.75" y="398.32" width="1.500" height="3" fill="#fff"/><circle cx="67.50" cy="397.03" r=".85" fill="#fff"/>
<path transform="translate(78.75 394.53) scale(.47)" d="M10 0l2.600 6.900 7.400.3-5.800 4.600 2 7.200L10 14.900 3.800 19l2-7.200L0 7.200l7.400-.3z" fill="#6ab5e2"/>
<text transform="translate(97.00 402.23) scale(0.89 1)" font-size="8.2" fill="#4040aa" text-anchor="start">COCINA</text>
<text transform="translate(249.00 402.23) scale(0.965 1)" font-size="8.2" fill="#4040aa" text-anchor="middle">3</text>
<text transform="translate(317.35 402.23) scale(0.965 1)" font-size="8.2" fill="#4040aa" text-anchor="middle">22838</text>
<text transform="translate(377.50 402.23) scale(0.965 1)" font-size="8.2" fill="#4040aa" text-anchor="middle">0.01</text>
<text transform="translate(435.35 402.23) scale(0.965 1)" font-size="8.2" fill="#4040aa" text-anchor="middle">4.20</text>
<rect x="464.00" y="396.12" width="27.9" height="6.200" fill="#1497db"/>
</svg>
</body>
</html>
